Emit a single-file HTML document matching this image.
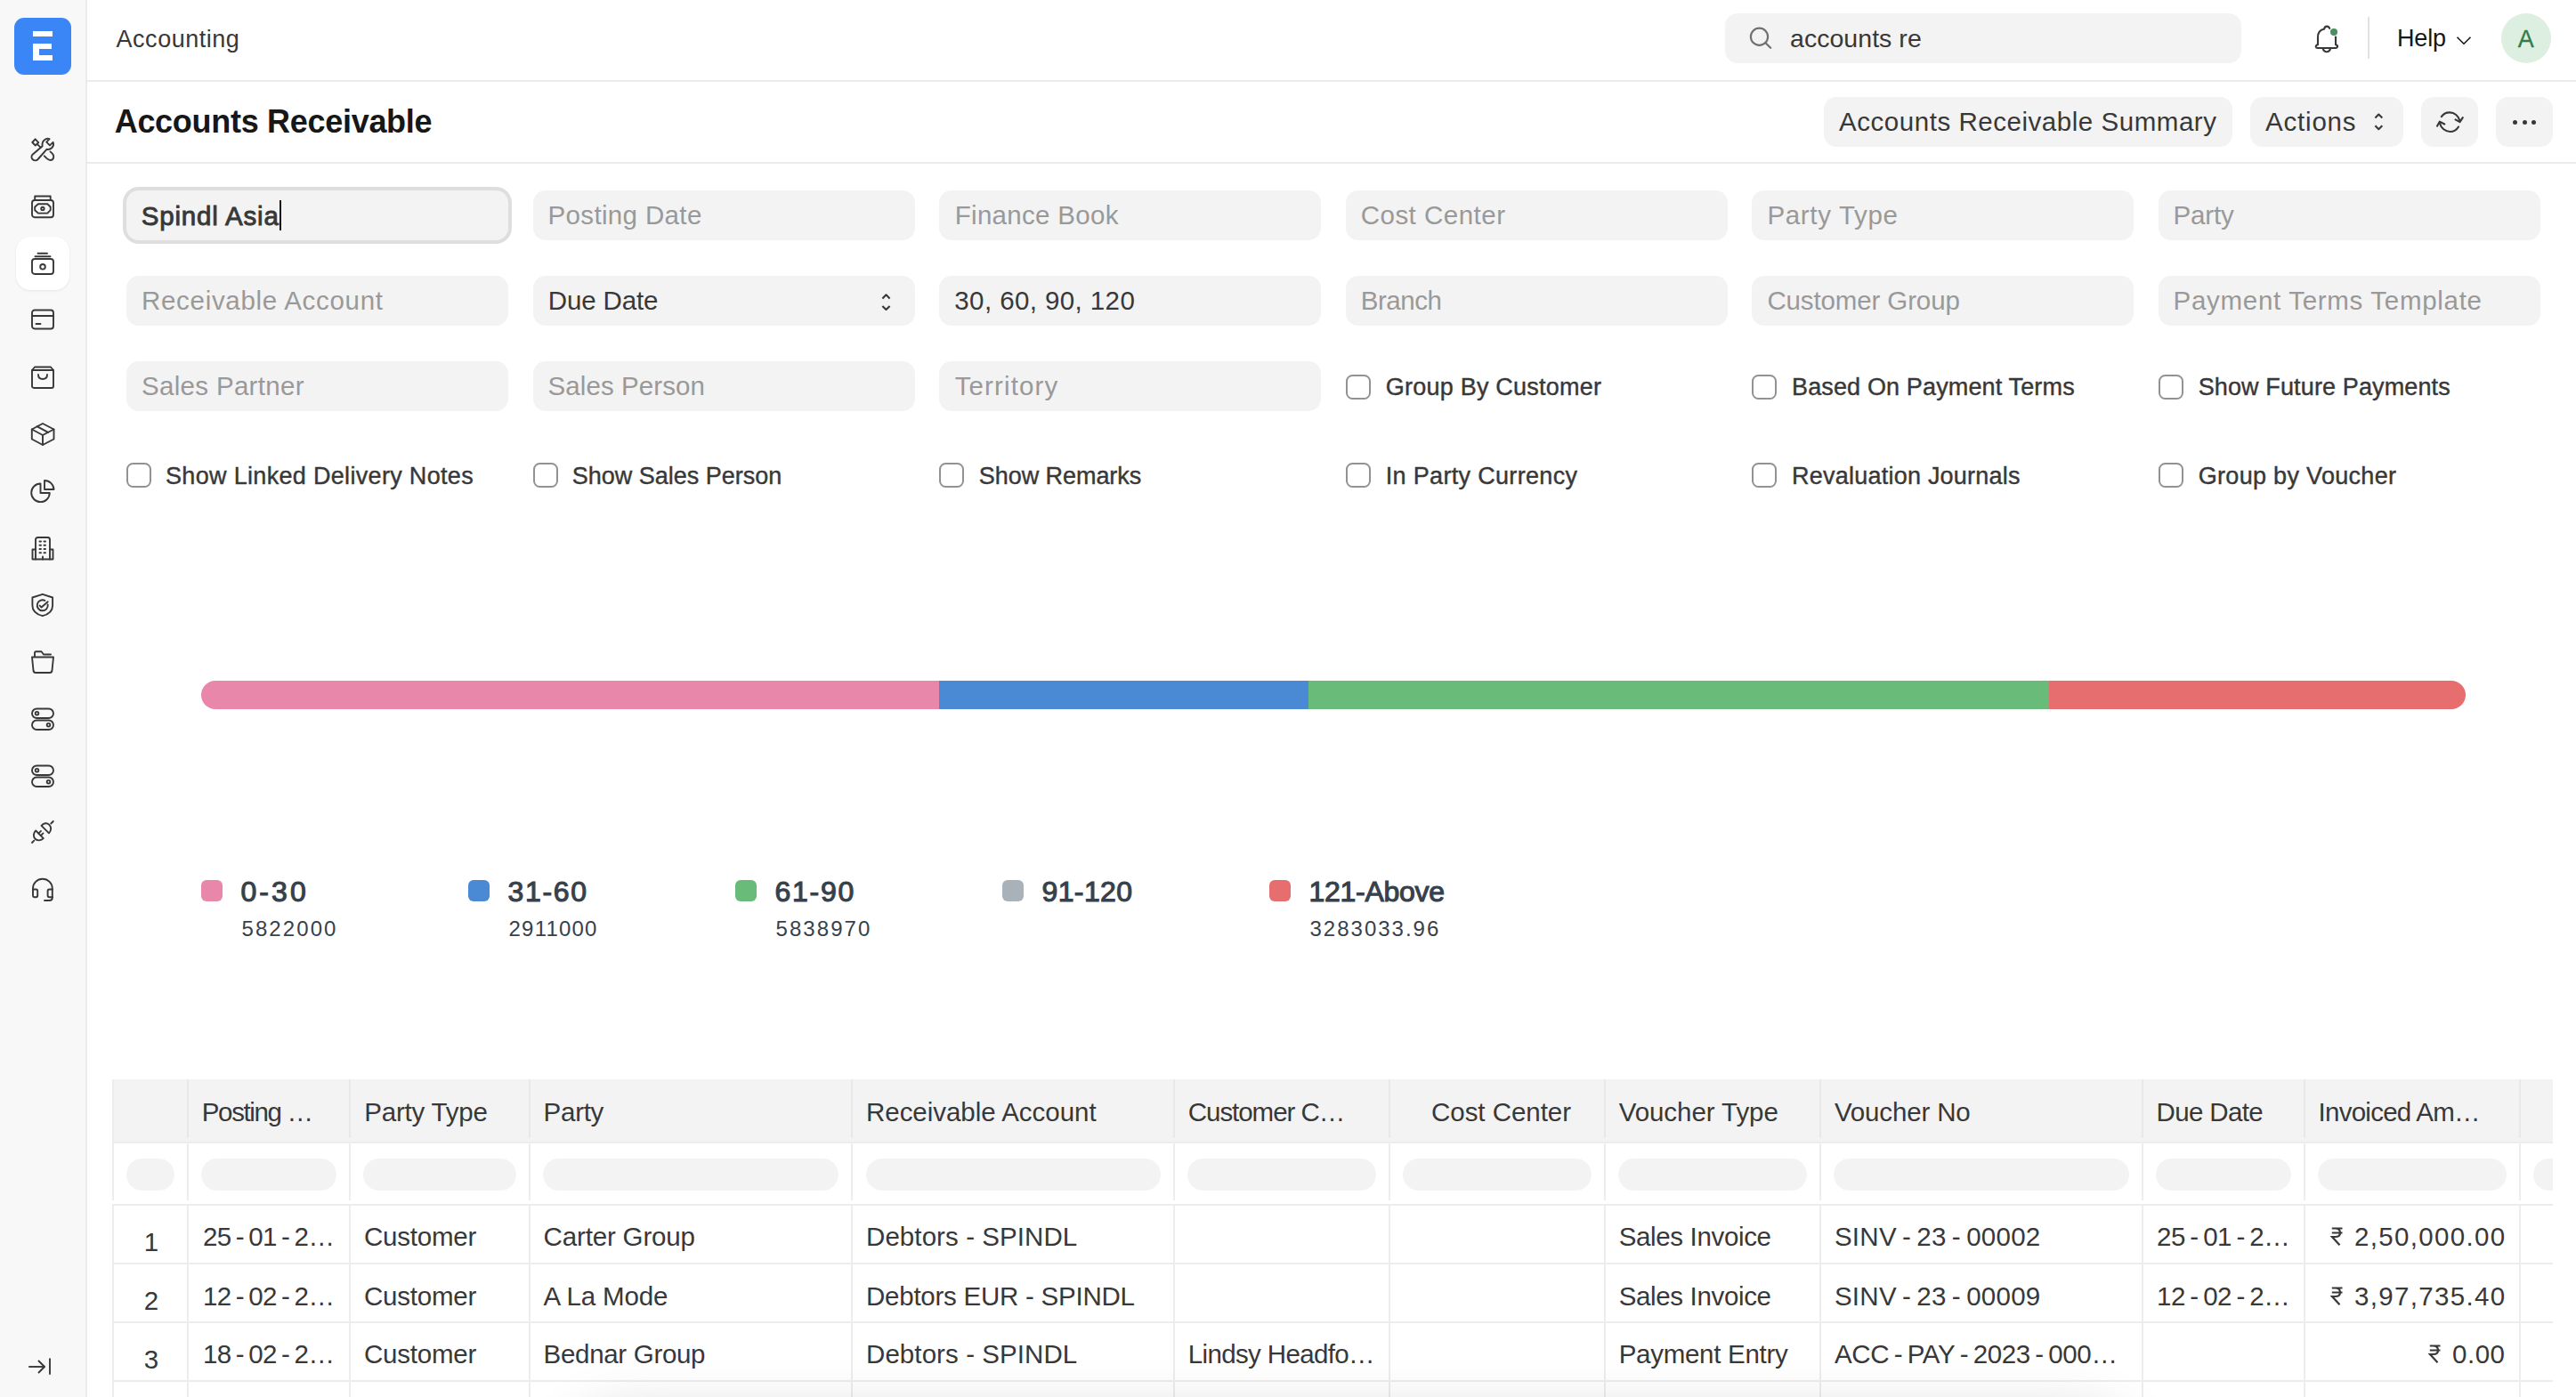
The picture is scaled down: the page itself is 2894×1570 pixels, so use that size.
<!DOCTYPE html>
<html><head><meta charset="utf-8"><title>Accounts Receivable</title>
<style>
*{box-sizing:border-box;margin:0;padding:0}
html,body{width:2894px;height:1570px;overflow:hidden;background:#fff;font-family:"Liberation Sans",sans-serif;color:#383838}
.t{position:absolute;white-space:nowrap}
.b{position:absolute}
.s{position:absolute;overflow:visible}
</style></head><body>
<div class="b" style="left:0px;top:0px;width:96px;height:1570px;background:#f8f8f8;border-radius:0px;"></div>
<div class="b" style="left:96px;top:0px;width:2px;height:1570px;background:#ebebeb;border-radius:0px;"></div>
<div class="b" style="left:16px;top:20px;width:64px;height:64px;background:#3b86f6;border-radius:11px;"></div>
<div class="b" style="left:37px;top:35px;width:22px;height:6px;background:#fff;border-radius:0px;"></div>
<div class="b" style="left:37px;top:49px;width:21px;height:5.5px;background:#fff;border-radius:0px;"></div>
<div class="b" style="left:37px;top:49px;width:7.299999999999997px;height:19px;background:#fff;border-radius:0px;"></div>
<div class="b" style="left:37px;top:62px;width:22.200000000000003px;height:6px;background:#fff;border-radius:0px;"></div>
<div class="b" style="left:18px;top:266px;width:60px;height:60px;background:#fff;border-radius:16px;box-shadow:0 1px 3px rgba(0,0,0,0.08);"></div>
<svg class="s" style="left:0px;top:0px;stroke-width:1.9;" width="96" height="1570" viewBox="0 0 96 1570" fill="none" stroke="#383838" stroke-width="2.5" stroke-linecap="round" stroke-linejoin="round">
<g transform="translate(35,155)">
 <path d="M12.6,9.2 C12.2,6.5 13,3.8 15,2.2 C16.7,0.8 18.8,0.5 20.6,1.2 L17.2,4.6 L21,8.4 L24.6,4.8 C25.4,6.8 25.1,9.2 23.4,11 C21.8,12.6 19.6,13.2 17.4,12.8 L7.6,24 C6,25.7 3.5,25.8 1.8,24.3 C0.1,22.8 0,20.3 1.5,18.7 Z"/>
 <path d="M1.3,5 L4.6,1.3 L8.2,5.2 L4.8,8.5 Z"/><path d="M7.4,7.6 L10.6,10.6"/>
 <path d="M21.5,15.6 C23.8,17.3 25.6,19.3 25.2,21.8 C24.8,24 22.8,25.1 20.8,24.9 C18.6,24.6 16.6,22.2 14.8,20.3"/>
</g>
<g transform="translate(35,219)">
 <path d="M4.2,5.5 V1.5 H21.7 V5.5"/>
 <rect x="1" y="6" width="24" height="19.2" rx="3"/>
 <path d="M4.2,13.5 L7.9,10.2 H18.3 L21.7,13.5 V17.2 L18.3,20.6 H7.9 L4.2,17.2 Z"/>
 <circle cx="12.9" cy="15.4" r="1.7"/>
</g>
<g transform="translate(35,283)">
 <path d="M7.5,1.8 H18"/><path d="M4.5,5.2 H21.5"/>
 <rect x="1" y="8" width="24" height="17" rx="3"/>
 <circle cx="13" cy="16.8" r="2.8"/>
</g>
<g transform="translate(35,347)">
 <rect x="1" y="1.5" width="24" height="21" rx="3"/>
 <path d="M1,8 H25"/><path d="M5.5,17 H10.5"/>
</g>
<g transform="translate(35,411)">
 <path d="M1,5 L4,1.5 H22 L25,5 V23 C25,24.2 24.2,25 23,25 H3 C1.8,25 1,24.2 1,23 Z"/>
 <path d="M1,5 H25"/>
 <path d="M8,10 C8,13 10,15 13,15 C16,15 18,13 18,10"/>
</g>
<g transform="translate(35,475)">
 <path d="M13,1 L25.5,7.5 V18.5 L13,25 L0.8,18.5 V7.5 Z"/>
 <path d="M0.8,7.5 L13,14 L25.5,7.5"/><path d="M13,14 V25"/>
 <path d="M6.5,4.2 L19,10.8"/>
</g>
<g transform="translate(35,539)">
 <path d="M10.5,4.5 A10.3,10.3 0 1 0 20.8,15 H10.5 Z"/>
 <path d="M15,1 A10.5,10.5 0 0 1 25.5,11 H15 Z"/>
</g>
<g transform="translate(35,603)">
 <path d="M5,25.5 V3.5 C5,2 6,1 7.5,1 H18.5 C20,1 21,2 21,3.5 V25.5"/>
 <path d="M5,14.5 H1.5 V25.5 H24.5 V14.5 H21"/>
 <path d="M9.5,5.5 H11 M14.5,5.5 H16 M9.5,9.8 H11 M14.5,9.8 H16 M9.5,14 H11 M14.5,14 H16 M9.5,18.3 H11 M14.5,18.3 H16"/>
 <path d="M13,22.5 V25.5"/>
</g>
<g transform="translate(35,667)">
 <path d="M12.8,0.8 L24.1,4.5 V13.5 C24.1,19.5 19.5,23.5 12.8,25.2 C6.1,23.5 1.4,19.5 1.4,13.5 V4.5 Z"/>
 <path d="M15.4,7.9 A6,6 0 1 0 18.7,12.4"/>
 <path d="M9.7,13.6 L11.6,15.5 L18.7,9.2"/>
</g>
<g transform="translate(35,731)">
 <path d="M4,6.5 V2.5 C4,1.7 4.5,1.2 5.3,1.2 H11.5 L14,4.5 H22"/>
 <path d="M1,7.5 H25 L23.5,22.5 C23.3,24 22.3,25 21,25 H5 C3.7,25 2.7,24 2.5,22.5 Z"/>
</g>
<g transform="translate(35,795)">
 <rect x="1" y="1.5" width="24" height="10.5" rx="5.25"/>
 <rect x="1" y="14.5" width="24" height="10.5" rx="5.25"/>
 <circle cx="6.5" cy="6.7" r="1.8"/><circle cx="19.5" cy="19.7" r="1.8"/>
</g>
<g transform="translate(35,859)">
 <rect x="1" y="1.5" width="24" height="10.5" rx="5.25"/>
 <rect x="1" y="14.5" width="24" height="10.5" rx="5.25"/>
 <circle cx="6.5" cy="6.7" r="1.8"/><circle cx="19.5" cy="19.7" r="1.8"/>
</g>
<g transform="translate(35,922)">
 <path d="M1,25 L3.3,22.7"/><path d="M22.3,3.5 L24.8,1"/>
 <path d="M5.2,11.5 L13.8,20.2 C11.3,22.8 7.2,23.2 4.5,20.8 C2,18.2 2.5,14 5.2,11.5 Z"/>
 <path d="M8.3,14.6 L11,11.9 M10.8,17.1 L13.5,14.4"/>
 <path d="M11.5,5.8 L20,14.3 C22.8,11.5 22.8,7.3 20.3,4.8 C17.7,2.3 14,2.8 11.5,5.8 Z"/>
</g>
<g transform="translate(35,987)">
 <path d="M2,13 V11.5 C2,5.5 6.8,0.8 12.8,0.8 C18.8,0.8 23.8,5.5 23.8,11.5 V22 C23.8,24 22.5,25 20.5,25 H15"/>
 <path d="M2,12.5 H5.5 C6.5,12.5 7.2,13.2 7.2,14.2 V19.5 C7.2,20.5 6.5,21.2 5.5,21.2 H3.7 C2.7,21.2 2,20.5 2,19.5 Z"/>
 <path d="M23.8,12.5 H20.3 C19.3,12.5 18.6,13.2 18.6,14.2 V19.5 C18.6,20.5 19.3,21.2 20.3,21.2 H23.8"/>
</g>
<g transform="translate(30,1525)" stroke-linecap="butt">
 <path d="M2.2,11 H20.5"/><path d="M13,4 L20,11 L13,18"/><path d="M26,1.5 V19.8"/>
</g>
</svg>
<div class="b" style="left:98px;top:90px;width:2796px;height:2px;background:#ebebeb;border-radius:0px;"></div>
<div class="t" style="left:130.60px;top:31.00px;font-size:27px;line-height:27px;color:#383838;letter-spacing:0.511px;">Accounting</div>
<div class="b" style="left:1938px;top:15px;width:580px;height:56px;background:#f3f3f3;border-radius:14px;"></div>
<svg class="s" style="left:1960px;top:25px;stroke:#707070;stroke-width:2.2;" width="40" height="40" viewBox="0 0 40 40" fill="none" stroke="#383838" stroke-width="2.5" stroke-linecap="round" stroke-linejoin="round"><circle cx="16.5" cy="16.2" r="9.6"/><path d="M23.5,23.2 L29.2,28.8"/></svg>
<div class="t" style="left:2011.00px;top:29.00px;font-size:28.5px;line-height:28.5px;color:#383838;letter-spacing:0.040px;">accounts re</div>
<svg class="s" style="left:2595px;top:24px;stroke-width:2.1;" width="40" height="40" viewBox="0 0 40 40" fill="none" stroke="#383838" stroke-width="2.5" stroke-linecap="round" stroke-linejoin="round"><path d="M9,26 V17.7 C9,12.8 11.8,9.6 16.2,8.6 C16.3,7 17.5,5.6 19.3,5.6 C20.6,5.6 21.7,6.6 22.2,7.9"/><path d="M29,17.5 V26"/><path d="M9,26 C7.3,26.7 6.6,27.8 6.8,28.8 C7,29.6 7.8,30 8.8,30 H28.8 C29.8,30 30.7,29.5 31,28.6 C31.2,27.6 30.6,26.6 29,26"/><path d="M14.5,30.3 C15.2,32.8 16.8,34.2 18.9,34.2 C21,34.2 22.6,32.8 23.2,30.3"/></svg>
<div class="b" style="left:2618px;top:32px;width:8px;height:8px;border-radius:50%;background:#4a8f63"></div>
<div class="b" style="left:2660px;top:19px;width:2px;height:47px;background:#e2e2e2;border-radius:0px;"></div>
<div class="t" style="left:2693.00px;top:30.20px;font-size:27px;line-height:27px;color:#171717;letter-spacing:-0.167px;">Help</div>
<svg class="s" style="left:2755px;top:36px;stroke:#171717;stroke-width:1.6;stroke-linecap:butt;" width="26" height="20" viewBox="0 0 26 20" fill="none" stroke="#383838" stroke-width="2.5" stroke-linecap="round" stroke-linejoin="round"><path d="M5.5,5.8 L13,13.2 L20.5,5.8"/></svg>
<div class="b" style="left:2810px;top:15px;width:56px;height:56px;border-radius:50%;background:#ddefe0"></div>
<div class="t" style="left:2828.80px;top:30.70px;font-size:27px;line-height:27px;color:#337b4c;letter-spacing:0.000px;-webkit-text-stroke:0.3px #337b4c;">A</div>
<div class="b" style="left:98px;top:182px;width:2796px;height:2px;background:#ebebeb;border-radius:0px;"></div>
<div class="t" style="left:128.70px;top:119.00px;font-size:36px;line-height:36px;color:#171717;letter-spacing:-0.294px;font-weight:bold;">Accounts Receivable</div>
<div class="b" style="left:2049px;top:109px;width:459px;height:56px;background:#f3f3f3;border-radius:14px;"></div>
<div class="t" style="left:2066.00px;top:122.00px;font-size:29.5px;line-height:29.5px;color:#383838;letter-spacing:0.542px;">Accounts Receivable Summary</div>
<div class="b" style="left:2528px;top:109px;width:172px;height:56px;background:#f3f3f3;border-radius:14px;"></div>
<div class="t" style="left:2545.00px;top:122.00px;font-size:29.5px;line-height:29.5px;color:#383838;letter-spacing:0.800px;">Actions</div>
<svg class="s" style="left:2660px;top:120px;stroke-width:2.1;stroke-linecap:butt;" width="24" height="30" viewBox="0 0 24 30" fill="none" stroke="#383838" stroke-width="2.5" stroke-linecap="round" stroke-linejoin="round"><path d="M8.4,12.5 L12.3,8.5 L16.3,12.5"/><path d="M8.4,21.2 L12.3,25.2 L16.3,21.2"/></svg>
<div class="b" style="left:2720px;top:109px;width:64px;height:56px;background:#f3f3f3;border-radius:14px;"></div>
<svg class="s" style="left:2732px;top:121px;stroke-width:2.1;" width="40" height="32" viewBox="0 0 40 32" fill="none" stroke="#383838" stroke-width="2.5" stroke-linecap="round" stroke-linejoin="round"><path d="M10.8,10.1 C12.8,7.2 16.2,5.4 20.1,5.4 C25.5,5.4 30,9.2 31.5,14.6"/><path d="M26.5,13.4 L31.5,16.2 L34.8,11.2"/><path d="M30,21.5 C28,24.8 24.5,27 20.6,27 C15.2,27 10.5,23 8.8,17.2"/><path d="M6,20.7 L8.8,15.7 L14.3,18.5"/></svg>
<div class="b" style="left:2804px;top:109px;width:64px;height:56px;background:#f3f3f3;border-radius:14px;"></div>
<div class="b" style="left:2823.3px;top:134.5px;width:5px;height:5px;border-radius:50%;background:#383838"></div>
<div class="b" style="left:2833.7px;top:134.5px;width:5px;height:5px;border-radius:50%;background:#383838"></div>
<div class="b" style="left:2844.1px;top:134.5px;width:5px;height:5px;border-radius:50%;background:#383838"></div>
<div class="b" style="left:138px;top:210px;width:437px;height:64px;border-radius:18px;background:#dedede"></div>
<div class="b" style="left:142px;top:214px;width:429px;height:56px;background:#f3f3f3;border-radius:14px;"></div>
<div class="b" style="left:142px;top:310px;width:429px;height:56px;background:#f3f3f3;border-radius:14px;"></div>
<div class="b" style="left:599px;top:214px;width:429px;height:56px;background:#f3f3f3;border-radius:14px;"></div>
<div class="b" style="left:599px;top:310px;width:429px;height:56px;background:#f3f3f3;border-radius:14px;"></div>
<div class="b" style="left:1055px;top:214px;width:429px;height:56px;background:#f3f3f3;border-radius:14px;"></div>
<div class="b" style="left:1055px;top:310px;width:429px;height:56px;background:#f3f3f3;border-radius:14px;"></div>
<div class="b" style="left:1512px;top:214px;width:429px;height:56px;background:#f3f3f3;border-radius:14px;"></div>
<div class="b" style="left:1512px;top:310px;width:429px;height:56px;background:#f3f3f3;border-radius:14px;"></div>
<div class="b" style="left:1968px;top:214px;width:429px;height:56px;background:#f3f3f3;border-radius:14px;"></div>
<div class="b" style="left:1968px;top:310px;width:429px;height:56px;background:#f3f3f3;border-radius:14px;"></div>
<div class="b" style="left:2425px;top:214px;width:429px;height:56px;background:#f3f3f3;border-radius:14px;"></div>
<div class="b" style="left:2425px;top:310px;width:429px;height:56px;background:#f3f3f3;border-radius:14px;"></div>
<div class="b" style="left:142px;top:406px;width:429px;height:56px;background:#f3f3f3;border-radius:14px;"></div>
<div class="b" style="left:599px;top:406px;width:429px;height:56px;background:#f3f3f3;border-radius:14px;"></div>
<div class="b" style="left:1055px;top:406px;width:429px;height:56px;background:#f3f3f3;border-radius:14px;"></div>
<div class="t" style="left:158.80px;top:227.60px;font-size:29.5px;line-height:29.5px;color:#383838;letter-spacing:0.810px;-webkit-text-stroke:0.9px #383838;">Spindl Asia</div>
<div class="b" style="left:314px;top:225px;width:2px;height:34px;background:#171717;border-radius:0px;"></div>
<div class="t" style="left:615.50px;top:227.00px;font-size:29.5px;line-height:29.5px;color:#999999;letter-spacing:0.355px;">Posting Date</div>
<div class="t" style="left:1072.70px;top:227.30px;font-size:29.5px;line-height:29.5px;color:#999999;letter-spacing:0.309px;">Finance Book</div>
<div class="t" style="left:1528.70px;top:227.30px;font-size:29.5px;line-height:29.5px;color:#999999;letter-spacing:0.490px;">Cost Center</div>
<div class="t" style="left:1985.40px;top:227.30px;font-size:29.5px;line-height:29.5px;color:#999999;letter-spacing:0.678px;">Party Type</div>
<div class="t" style="left:2441.60px;top:227.30px;font-size:29.5px;line-height:29.5px;color:#999999;letter-spacing:-0.200px;">Party</div>
<div class="t" style="left:159.00px;top:323.00px;font-size:29.5px;line-height:29.5px;color:#999999;letter-spacing:0.700px;">Receivable Account</div>
<div class="t" style="left:615.80px;top:322.60px;font-size:29.5px;line-height:29.5px;color:#383838;letter-spacing:-0.129px;">Due Date</div>
<svg class="s" style="left:982px;top:326px;stroke-width:2.1;stroke-linecap:butt;" width="26" height="28" viewBox="0 0 26 28" fill="none" stroke="#383838" stroke-width="2.5" stroke-linecap="round" stroke-linejoin="round"><path d="M9.4,9.5 L13.5,5.3 L17.6,9.5"/><path d="M9.4,17.9 L13.5,22 L17.6,17.9"/></svg>
<div class="t" style="left:1072.30px;top:322.70px;font-size:29.5px;line-height:29.5px;color:#383838;letter-spacing:0.407px;">30, 60, 90, 120</div>
<div class="t" style="left:1528.70px;top:323.00px;font-size:29.5px;line-height:29.5px;color:#999999;letter-spacing:-0.440px;">Branch</div>
<div class="t" style="left:1985.40px;top:323.00px;font-size:29.5px;line-height:29.5px;color:#999999;letter-spacing:-0.123px;">Customer Group</div>
<div class="t" style="left:2441.60px;top:323.00px;font-size:29.5px;line-height:29.5px;color:#999999;letter-spacing:0.695px;">Payment Terms Template</div>
<div class="t" style="left:159.00px;top:419.00px;font-size:29.5px;line-height:29.5px;color:#999999;letter-spacing:0.317px;">Sales Partner</div>
<div class="t" style="left:615.50px;top:419.00px;font-size:29.5px;line-height:29.5px;color:#999999;letter-spacing:0.091px;">Sales Person</div>
<div class="t" style="left:1072.70px;top:418.60px;font-size:29.5px;line-height:29.5px;color:#999999;letter-spacing:1.125px;">Territory</div>
<div class="b" style="left:1512px;top:421px;width:28px;height:28px;border:2px solid #929292;border-radius:7.5px;background:#fff"></div>
<div class="t" style="left:1556.80px;top:422.00px;font-size:27px;line-height:27px;color:#383838;letter-spacing:0.225px;-webkit-text-stroke:0.4px #383838;">Group By Customer</div>
<div class="b" style="left:1968px;top:421px;width:28px;height:28px;border:2px solid #929292;border-radius:7.5px;background:#fff"></div>
<div class="t" style="left:2013.00px;top:422.00px;font-size:27px;line-height:27px;color:#383838;letter-spacing:0.143px;-webkit-text-stroke:0.4px #383838;">Based On Payment Terms</div>
<div class="b" style="left:2425px;top:421px;width:28px;height:28px;border:2px solid #929292;border-radius:7.5px;background:#fff"></div>
<div class="t" style="left:2469.70px;top:422.00px;font-size:27px;line-height:27px;color:#383838;letter-spacing:0.126px;-webkit-text-stroke:0.4px #383838;">Show Future Payments</div>
<div class="b" style="left:142px;top:520px;width:28px;height:28px;border:2px solid #929292;border-radius:7.5px;background:#fff"></div>
<div class="t" style="left:186.00px;top:522.00px;font-size:27px;line-height:27px;color:#383838;letter-spacing:0.320px;-webkit-text-stroke:0.4px #383838;">Show Linked Delivery Notes</div>
<div class="b" style="left:599px;top:520px;width:28px;height:28px;border:2px solid #929292;border-radius:7.5px;background:#fff"></div>
<div class="t" style="left:642.70px;top:522.00px;font-size:27px;line-height:27px;color:#383838;letter-spacing:-0.000px;-webkit-text-stroke:0.4px #383838;">Show Sales Person</div>
<div class="b" style="left:1055px;top:520px;width:28px;height:28px;border:2px solid #929292;border-radius:7.5px;background:#fff"></div>
<div class="t" style="left:1099.80px;top:522.00px;font-size:27px;line-height:27px;color:#383838;letter-spacing:-0.055px;-webkit-text-stroke:0.4px #383838;">Show Remarks</div>
<div class="b" style="left:1512px;top:520px;width:28px;height:28px;border:2px solid #929292;border-radius:7.5px;background:#fff"></div>
<div class="t" style="left:1556.80px;top:522.00px;font-size:27px;line-height:27px;color:#383838;letter-spacing:0.319px;-webkit-text-stroke:0.4px #383838;">In Party Currency</div>
<div class="b" style="left:1968px;top:520px;width:28px;height:28px;border:2px solid #929292;border-radius:7.5px;background:#fff"></div>
<div class="t" style="left:2013.00px;top:522.00px;font-size:27px;line-height:27px;color:#383838;letter-spacing:0.232px;-webkit-text-stroke:0.4px #383838;">Revaluation Journals</div>
<div class="b" style="left:2425px;top:520px;width:28px;height:28px;border:2px solid #929292;border-radius:7.5px;background:#fff"></div>
<div class="t" style="left:2469.70px;top:522.00px;font-size:27px;line-height:27px;color:#383838;letter-spacing:0.313px;-webkit-text-stroke:0.4px #383838;">Group by Voucher</div>
<div class="b" style="left:225.8px;top:765px;width:2544.20px;height:32px;border-radius:16px;overflow:hidden"><div style="position:absolute;left:0.00px;top:0;width:830.09px;height:32px;background:#e887aa"></div><div style="position:absolute;left:829.59px;top:0;width:415.29px;height:32px;background:#4a89d4"></div><div style="position:absolute;left:1244.38px;top:0;width:832.51px;height:32px;background:#68bb79"></div><div style="position:absolute;left:2076.39px;top:0;width:468.31px;height:32px;background:#e66e6e"></div></div>
<div class="b" style="left:226px;top:989px;width:24px;height:24px;background:#e887aa;border-radius:6px;"></div>
<div class="t" style="left:270.50px;top:985.50px;font-size:32px;line-height:32px;color:#36414c;letter-spacing:3.067px;-webkit-text-stroke:1.1px #36414c;">0-30</div>
<div class="t" style="left:271.50px;top:1032.00px;font-size:24px;line-height:24px;color:#36414c;letter-spacing:2.083px;">5822000</div>
<div class="b" style="left:526px;top:989px;width:24px;height:24px;background:#4a89d4;border-radius:6px;"></div>
<div class="t" style="left:570.50px;top:985.50px;font-size:32px;line-height:32px;color:#36414c;letter-spacing:1.675px;-webkit-text-stroke:1.1px #36414c;">31-60</div>
<div class="t" style="left:571.50px;top:1032.00px;font-size:24px;line-height:24px;color:#36414c;letter-spacing:1.217px;">2911000</div>
<div class="b" style="left:826px;top:989px;width:24px;height:24px;background:#68bb79;border-radius:6px;"></div>
<div class="t" style="left:870.50px;top:985.50px;font-size:32px;line-height:32px;color:#36414c;letter-spacing:1.750px;-webkit-text-stroke:1.1px #36414c;">61-90</div>
<div class="t" style="left:871.50px;top:1032.00px;font-size:24px;line-height:24px;color:#36414c;letter-spacing:2.067px;">5838970</div>
<div class="b" style="left:1126px;top:989px;width:24px;height:24px;background:#a9b1b9;border-radius:6px;"></div>
<div class="t" style="left:1170.50px;top:985.50px;font-size:32px;line-height:32px;color:#36414c;letter-spacing:0.380px;-webkit-text-stroke:1.1px #36414c;">91-120</div>
<div class="b" style="left:1426px;top:989px;width:24px;height:24px;background:#e66e6e;border-radius:6px;"></div>
<div class="t" style="left:1470.50px;top:985.50px;font-size:32px;line-height:32px;color:#36414c;letter-spacing:-0.288px;-webkit-text-stroke:1.1px #36414c;">121-Above</div>
<div class="t" style="left:1471.50px;top:1032.00px;font-size:24px;line-height:24px;color:#36414c;letter-spacing:2.000px;">3283033.96</div>
<div class="b" style="left:126px;top:1213px;width:2742px;height:70px;background:#f3f3f3;border-radius:0px;"></div>
<div class="b" style="left:126px;top:1213px;width:2px;height:136px;background:#ededed;border-radius:0px;"></div>
<div class="b" style="left:126px;top:1353px;width:2px;height:217px;background:#ededed;border-radius:0px;"></div>
<div class="b" style="left:210px;top:1213px;width:2px;height:66px;background:#e8e8e8;border-radius:0px;"></div>
<div class="b" style="left:210px;top:1285px;width:2px;height:64px;background:#ededed;border-radius:0px;"></div>
<div class="b" style="left:210px;top:1355px;width:2px;height:215px;background:#ededed;border-radius:0px;"></div>
<div class="b" style="left:392px;top:1213px;width:2px;height:66px;background:#e8e8e8;border-radius:0px;"></div>
<div class="b" style="left:392px;top:1285px;width:2px;height:64px;background:#ededed;border-radius:0px;"></div>
<div class="b" style="left:392px;top:1355px;width:2px;height:215px;background:#ededed;border-radius:0px;"></div>
<div class="b" style="left:594px;top:1213px;width:2px;height:66px;background:#e8e8e8;border-radius:0px;"></div>
<div class="b" style="left:594px;top:1285px;width:2px;height:64px;background:#ededed;border-radius:0px;"></div>
<div class="b" style="left:594px;top:1355px;width:2px;height:215px;background:#ededed;border-radius:0px;"></div>
<div class="b" style="left:956px;top:1213px;width:2px;height:66px;background:#e8e8e8;border-radius:0px;"></div>
<div class="b" style="left:956px;top:1285px;width:2px;height:64px;background:#ededed;border-radius:0px;"></div>
<div class="b" style="left:956px;top:1355px;width:2px;height:215px;background:#ededed;border-radius:0px;"></div>
<div class="b" style="left:1318px;top:1213px;width:2px;height:66px;background:#e8e8e8;border-radius:0px;"></div>
<div class="b" style="left:1318px;top:1285px;width:2px;height:64px;background:#ededed;border-radius:0px;"></div>
<div class="b" style="left:1318px;top:1355px;width:2px;height:215px;background:#ededed;border-radius:0px;"></div>
<div class="b" style="left:1560px;top:1213px;width:2px;height:66px;background:#e8e8e8;border-radius:0px;"></div>
<div class="b" style="left:1560px;top:1285px;width:2px;height:64px;background:#ededed;border-radius:0px;"></div>
<div class="b" style="left:1560px;top:1355px;width:2px;height:215px;background:#ededed;border-radius:0px;"></div>
<div class="b" style="left:1802px;top:1213px;width:2px;height:66px;background:#e8e8e8;border-radius:0px;"></div>
<div class="b" style="left:1802px;top:1285px;width:2px;height:64px;background:#ededed;border-radius:0px;"></div>
<div class="b" style="left:1802px;top:1355px;width:2px;height:215px;background:#ededed;border-radius:0px;"></div>
<div class="b" style="left:2044px;top:1213px;width:2px;height:66px;background:#e8e8e8;border-radius:0px;"></div>
<div class="b" style="left:2044px;top:1285px;width:2px;height:64px;background:#ededed;border-radius:0px;"></div>
<div class="b" style="left:2044px;top:1355px;width:2px;height:215px;background:#ededed;border-radius:0px;"></div>
<div class="b" style="left:2406px;top:1213px;width:2px;height:66px;background:#e8e8e8;border-radius:0px;"></div>
<div class="b" style="left:2406px;top:1285px;width:2px;height:64px;background:#ededed;border-radius:0px;"></div>
<div class="b" style="left:2406px;top:1355px;width:2px;height:215px;background:#ededed;border-radius:0px;"></div>
<div class="b" style="left:2588px;top:1213px;width:2px;height:66px;background:#e8e8e8;border-radius:0px;"></div>
<div class="b" style="left:2588px;top:1285px;width:2px;height:64px;background:#ededed;border-radius:0px;"></div>
<div class="b" style="left:2588px;top:1355px;width:2px;height:215px;background:#ededed;border-radius:0px;"></div>
<div class="b" style="left:2830px;top:1213px;width:2px;height:66px;background:#e8e8e8;border-radius:0px;"></div>
<div class="b" style="left:2830px;top:1285px;width:2px;height:64px;background:#ededed;border-radius:0px;"></div>
<div class="b" style="left:2830px;top:1355px;width:2px;height:215px;background:#ededed;border-radius:0px;"></div>
<div class="b" style="left:126px;top:1283px;width:2742px;height:2px;background:#ededed;border-radius:0px;"></div>
<div class="b" style="left:126px;top:1353px;width:2742px;height:2px;background:#ededed;border-radius:0px;"></div>
<div class="b" style="left:126px;top:1419px;width:2742px;height:2px;background:#ededed;border-radius:0px;"></div>
<div class="b" style="left:126px;top:1485px;width:2742px;height:2px;background:#ededed;border-radius:0px;"></div>
<div class="b" style="left:126px;top:1551px;width:2742px;height:2px;background:#ededed;border-radius:0px;"></div>
<div class="b" style="left:142px;top:1302px;width:53.7px;height:36px;border-radius:18px;background:#f3f3f3"></div>
<div class="b" style="left:225.8px;top:1302px;width:152.0px;height:36px;border-radius:18px;background:#f3f3f3"></div>
<div class="b" style="left:408px;top:1302px;width:172.0px;height:36px;border-radius:18px;background:#f3f3f3"></div>
<div class="b" style="left:610px;top:1302px;width:332.0px;height:36px;border-radius:18px;background:#f3f3f3"></div>
<div class="b" style="left:973px;top:1302px;width:331.0px;height:36px;border-radius:18px;background:#f3f3f3"></div>
<div class="b" style="left:1334px;top:1302px;width:212.0px;height:36px;border-radius:18px;background:#f3f3f3"></div>
<div class="b" style="left:1575.8px;top:1302px;width:211.8px;height:36px;border-radius:18px;background:#f3f3f3"></div>
<div class="b" style="left:1818px;top:1302px;width:212.0px;height:36px;border-radius:18px;background:#f3f3f3"></div>
<div class="b" style="left:2060px;top:1302px;width:331.6px;height:36px;border-radius:18px;background:#f3f3f3"></div>
<div class="b" style="left:2421.8px;top:1302px;width:152.2px;height:36px;border-radius:18px;background:#f3f3f3"></div>
<div class="b" style="left:2603.6px;top:1302px;width:212.0px;height:36px;border-radius:18px;background:#f3f3f3"></div>
<div class="b" style="left:2846px;top:1302px;width:54.0px;height:36px;border-radius:18px;background:#f3f3f3"></div>
<div class="b" style="left:2868px;top:1212px;width:26px;height:358px;background:#fff;border-radius:0px;"></div>
<div class="t" style="left:226.80px;top:1235.00px;font-size:29.5px;line-height:29.5px;color:#383838;letter-spacing:-1.363px;">Posting …</div>
<div class="t" style="left:409.20px;top:1235.00px;font-size:29.5px;line-height:29.5px;color:#383838;letter-spacing:-0.189px;">Party Type</div>
<div class="t" style="left:610.60px;top:1235.00px;font-size:29.5px;line-height:29.5px;color:#383838;letter-spacing:-0.275px;">Party</div>
<div class="t" style="left:973.00px;top:1235.00px;font-size:29.5px;line-height:29.5px;color:#383838;letter-spacing:-0.029px;">Receivable Account</div>
<div class="t" style="left:1334.80px;top:1235.00px;font-size:29.5px;line-height:29.5px;color:#383838;letter-spacing:-1.050px;">Customer C…</div>
<div class="t" style="left:1608.00px;top:1235.00px;font-size:29.5px;line-height:29.5px;color:#383838;letter-spacing:-0.040px;">Cost Center</div>
<div class="t" style="left:1818.70px;top:1235.00px;font-size:29.5px;line-height:29.5px;color:#383838;letter-spacing:-0.064px;">Voucher Type</div>
<div class="t" style="left:2060.90px;top:1235.00px;font-size:29.5px;line-height:29.5px;color:#383838;letter-spacing:-0.144px;">Voucher No</div>
<div class="t" style="left:2422.50px;top:1235.00px;font-size:29.5px;line-height:29.5px;color:#383838;letter-spacing:-0.643px;">Due Date</div>
<div class="t" style="left:2604.60px;top:1235.00px;font-size:29.5px;line-height:29.5px;color:#383838;letter-spacing:-0.755px;">Invoiced Am…</div>
<div class="t" style="left:161.70px;top:1381.00px;font-size:29.5px;line-height:29.5px;color:#383838;letter-spacing:0.000px;">1</div>
<div class="t" style="left:227.90px;top:1375.00px;font-size:29.5px;line-height:29.5px;color:#383838;letter-spacing:-0.618px;">25 - 01 - 2…</div>
<div class="t" style="left:409.00px;top:1375.00px;font-size:29.5px;line-height:29.5px;color:#383838;letter-spacing:-0.214px;">Customer</div>
<div class="t" style="left:610.60px;top:1375.00px;font-size:29.5px;line-height:29.5px;color:#383838;letter-spacing:-0.164px;">Carter Group</div>
<div class="t" style="left:973.00px;top:1375.00px;font-size:29.5px;line-height:29.5px;color:#383838;letter-spacing:0.080px;">Debtors - SPINDL</div>
<div class="t" style="left:1818.70px;top:1375.00px;font-size:29.5px;line-height:29.5px;color:#383838;letter-spacing:-0.350px;">Sales Invoice</div>
<div class="t" style="left:2060.90px;top:1375.00px;font-size:29.5px;line-height:29.5px;color:#383838;letter-spacing:0.275px;">SINV - 23 - 00002</div>
<div class="t" style="left:2423.00px;top:1375.00px;font-size:29.5px;line-height:29.5px;color:#383838;letter-spacing:-0.455px;">25 - 01 - 2…</div>
<div class="t" style="left:2645.00px;top:1375.00px;font-size:29.5px;line-height:29.5px;color:#383838;letter-spacing:1.320px;">2,50,000.00</div>
<svg class="s" style="left:2619px;top:1379px;stroke-width:2.2;stroke-linecap:butt;stroke-linejoin:miter;" width="16" height="24" viewBox="0 0 16 24" fill="none" stroke="#383838" stroke-width="2.5" stroke-linecap="round" stroke-linejoin="round"><path d="M0.8,1.5 H12.5 M0.8,6.5 H12.5 M0.8,1.5 H4.5 C8.3,1.5 10,3.8 10,6.4 C10,9.2 7.8,11 4.5,11 H1 L9.5,20.3"/></svg>
<div class="t" style="left:161.70px;top:1447.00px;font-size:29.5px;line-height:29.5px;color:#383838;letter-spacing:0.000px;">2</div>
<div class="t" style="left:227.90px;top:1441.50px;font-size:29.5px;line-height:29.5px;color:#383838;letter-spacing:-0.618px;">12 - 02 - 2…</div>
<div class="t" style="left:409.00px;top:1441.50px;font-size:29.5px;line-height:29.5px;color:#383838;letter-spacing:-0.214px;">Customer</div>
<div class="t" style="left:610.60px;top:1441.50px;font-size:29.5px;line-height:29.5px;color:#383838;letter-spacing:-0.163px;">A La Mode</div>
<div class="t" style="left:973.00px;top:1441.50px;font-size:29.5px;line-height:29.5px;color:#383838;letter-spacing:-0.242px;">Debtors EUR - SPINDL</div>
<div class="t" style="left:1818.70px;top:1441.50px;font-size:29.5px;line-height:29.5px;color:#383838;letter-spacing:-0.350px;">Sales Invoice</div>
<div class="t" style="left:2060.90px;top:1441.50px;font-size:29.5px;line-height:29.5px;color:#383838;letter-spacing:0.275px;">SINV - 23 - 00009</div>
<div class="t" style="left:2423.00px;top:1441.50px;font-size:29.5px;line-height:29.5px;color:#383838;letter-spacing:-0.455px;">12 - 02 - 2…</div>
<div class="t" style="left:2645.00px;top:1441.50px;font-size:29.5px;line-height:29.5px;color:#383838;letter-spacing:1.320px;">3,97,735.40</div>
<svg class="s" style="left:2619px;top:1445.5px;stroke-width:2.2;stroke-linecap:butt;stroke-linejoin:miter;" width="16" height="24" viewBox="0 0 16 24" fill="none" stroke="#383838" stroke-width="2.5" stroke-linecap="round" stroke-linejoin="round"><path d="M0.8,1.5 H12.5 M0.8,6.5 H12.5 M0.8,1.5 H4.5 C8.3,1.5 10,3.8 10,6.4 C10,9.2 7.8,11 4.5,11 H1 L9.5,20.3"/></svg>
<div class="t" style="left:161.70px;top:1512.50px;font-size:29.5px;line-height:29.5px;color:#383838;letter-spacing:0.000px;">3</div>
<div class="t" style="left:227.90px;top:1507.00px;font-size:29.5px;line-height:29.5px;color:#383838;letter-spacing:-0.618px;">18 - 02 - 2…</div>
<div class="t" style="left:409.00px;top:1507.00px;font-size:29.5px;line-height:29.5px;color:#383838;letter-spacing:-0.214px;">Customer</div>
<div class="t" style="left:610.60px;top:1507.00px;font-size:29.5px;line-height:29.5px;color:#383838;letter-spacing:-0.309px;">Bednar Group</div>
<div class="t" style="left:973.00px;top:1507.00px;font-size:29.5px;line-height:29.5px;color:#383838;letter-spacing:0.080px;">Debtors - SPINDL</div>
<div class="t" style="left:1334.80px;top:1507.00px;font-size:29.5px;line-height:29.5px;color:#383838;letter-spacing:-0.646px;">Lindsy Headfo…</div>
<div class="t" style="left:1818.70px;top:1507.00px;font-size:29.5px;line-height:29.5px;color:#383838;letter-spacing:-0.283px;">Payment Entry</div>
<div class="t" style="left:2061.00px;top:1507.00px;font-size:29.5px;line-height:29.5px;color:#383838;letter-spacing:-0.377px;">ACC - PAY - 2023 - 000…</div>
<div class="t" style="left:2755.00px;top:1507.00px;font-size:29.5px;line-height:29.5px;color:#383838;letter-spacing:0.533px;">0.00</div>
<svg class="s" style="left:2729px;top:1511px;stroke-width:2.2;stroke-linecap:butt;stroke-linejoin:miter;" width="16" height="24" viewBox="0 0 16 24" fill="none" stroke="#383838" stroke-width="2.5" stroke-linecap="round" stroke-linejoin="round"><path d="M0.8,1.5 H12.5 M0.8,6.5 H12.5 M0.8,1.5 H4.5 C8.3,1.5 10,3.8 10,6.4 C10,9.2 7.8,11 4.5,11 H1 L9.5,20.3"/></svg>
<div class="b" style="left:98px;top:1400px;width:2796px;height:170px;overflow:hidden"><div style="position:absolute;left:540px;top:182px;width:1760px;height:120px;border-radius:60px;background:#fff;box-shadow:0 0 60px rgba(0,0,0,0.13)"></div></div>
</body></html>
